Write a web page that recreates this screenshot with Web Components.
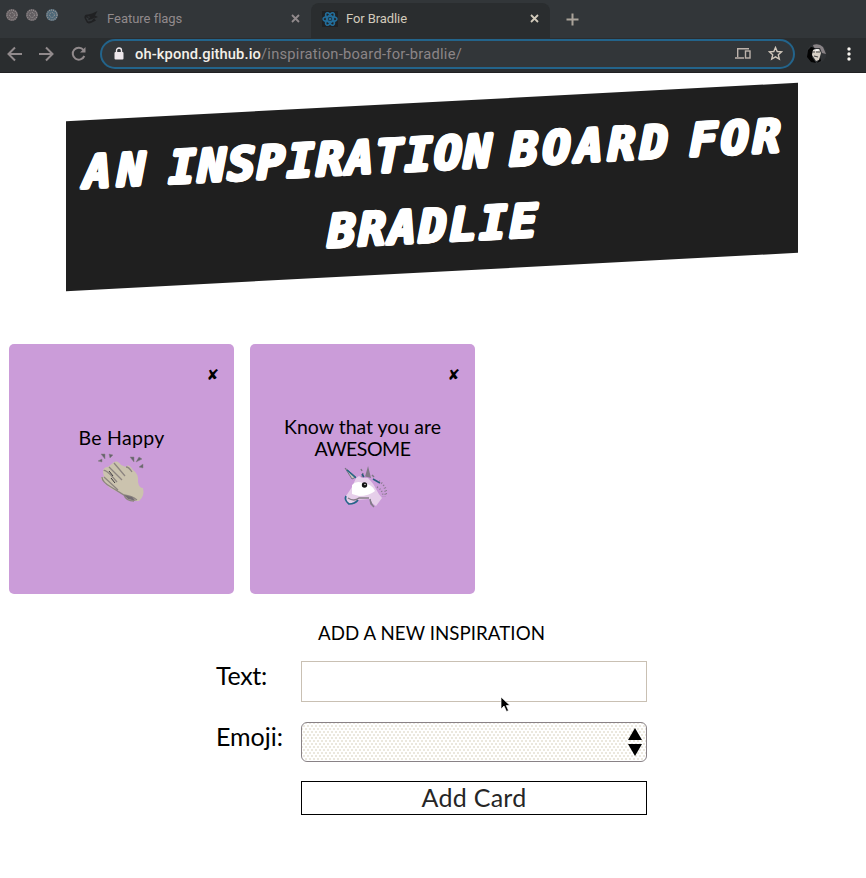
<!DOCTYPE html>
<html lang="en">
<head>
<meta charset="utf-8">
<title>For Bradlie</title>
<style>
html,body{margin:0;height:100%;background:#fff;overflow:hidden}
body{font-family:Lato,"Open Sans",sans-serif;color:#000}
</style>
</head>
<body>
<inspiration-app></inspiration-app>
<script>
const define = (name, html, setup) => {
  const template = document.createElement('template');
  template.innerHTML = html;
  customElements.define(name, class extends HTMLElement {
    connectedCallback() {
      if (this.shadowRoot) return;
      this.attachShadow({mode: 'open'}).append(template.content.cloneNode(true));
      if (setup) setup(this, this.shadowRoot);
    }
  });
};

// Inline text whose tracking is adjusted to fill the width given in "w".
define('fit-text', `
<style>:host{display:inline-block;white-space:nowrap;text-align:left}span{display:inline-block}</style>
<span><slot></slot></span>`, (el, root) => {
  const span = root.querySelector('span'), w = +el.getAttribute('w');
  const natural = span.getBoundingClientRect().width;
  span.style.letterSpacing = (w - natural) / el.textContent.length + 'px';
  el.style.width = w + 'px';
});

define('browser-tab', `
<style>
:host{display:flex;align-items:center;height:35px;box-sizing:border-box;color:#918a8c;font:13px Roboto,sans-serif;position:relative}
:host([active]){background:#2a2d2f;color:#d2cabb;border-radius:8px 8px 0 0}
.icon{width:18px;height:18px;display:flex;margin-right:7px}
.title{flex:1}
.close{width:9px;height:9px}
</style>
<span class="icon"><slot name="icon"></slot></span><span class="title"><slot></slot></span>
<svg class="close" viewBox="0 0 9 9" stroke="currentColor" stroke-width="1.8"><path d="M1 1l7 7M8 1L1 8"/></svg>`);

define('browser-tabs', `
<style>
:host{display:flex;height:38px;background:#323639;box-sizing:border-box;padding:3px 0 0 6px}
.lights{display:flex;gap:8px;margin-top:6px;width:76px}
.lights svg{width:12px;height:12px}
.one{width:218px;margin-top:-2px}
.two{width:239px;padding:0 11px 1px 10px;margin-left:11px;height:35px;margin-top:0}
.one{padding-bottom:1px}
.two{padding-bottom:4px}
.plus{width:13px;height:13px;margin:10px 0 0 16px}
</style>
<div class="lights">
<svg viewBox="0 0 12 12"><circle cx="6" cy="6" r="6" fill="#655f62"/><circle cx="6" cy="6" r="5" fill="none" stroke="#9b9393" stroke-width="1.2" stroke-dasharray="1 1"/><circle cx="6" cy="6" r="2.4" fill="none" stroke="#a69f9e" stroke-dasharray="1 1"/></svg>
<svg viewBox="0 0 12 12"><circle cx="6" cy="6" r="6" fill="#625e62"/><circle cx="6" cy="6" r="5" fill="none" stroke="#9b9393" stroke-width="1.2" stroke-dasharray="1 1"/><circle cx="6" cy="6" r="2.4" fill="none" stroke="#a69f9e" stroke-dasharray="1 1"/></svg>
<svg viewBox="0 0 12 12"><circle cx="6" cy="6" r="6" fill="#4d6878"/><circle cx="6" cy="6" r="5" fill="none" stroke="#a39a98" stroke-width="1.2" stroke-dasharray="1 1"/><circle cx="6" cy="6" r="2.4" fill="none" stroke="#a69f9e" stroke-dasharray="1 1"/></svg>
</div>
<browser-tab class="one"><svg slot="icon" viewBox="0 0 18 18"><path d="M2.500 9Q2 5 6 5.500L10 4.500 15.500 2 13 6.500 16 8 12 9.500 14 11.500 10 13.500Q5 16 4 12Z" fill="#202123"/><path d="M4 9Q6 6 8 8L6 11Q10 11 13 8L9.500 12 6 12.500Z" fill="#323639"/><path d="M5 8l3 2 4-4" stroke="#202123" fill="none"/></svg><fit-text w="75">Feature flags</fit-text></browser-tab>
<browser-tab class="two" active><svg slot="icon" viewBox="0 0 18 18"><rect x="1" y="1" width="16" height="16" fill="#202123"/><g fill="none" stroke="#236d9a" stroke-width="1.5"><ellipse cx="9" cy="9" rx="7" ry="2.8"/><ellipse cx="9" cy="9" rx="7" ry="2.8" transform="rotate(60 9 9)"/><ellipse cx="9" cy="9" rx="7" ry="2.8" transform="rotate(120 9 9)"/></g><circle cx="9" cy="9" r="1.5" fill="#236d9a"/></svg><fit-text w="61">For Bradlie</fit-text></browser-tab>
<svg class="plus" viewBox="0 0 13 13" stroke="#aaa39a" stroke-width="2"><path d="M6.5 .5v12M.5 6.5h12"/></svg>`);

define('browser-toolbar', `
<style>
:host{display:flex;align-items:center;height:35px;background:#2a2d2f;box-sizing:border-box;padding:0 12px 3px 7px;border-bottom:1px solid #202123}
.nav{width:15px;height:16px;margin-right:17px}
.bar{flex:none;width:695px;height:30px;box-sizing:border-box;border:2px solid #23648b;border-radius:15px;background:#323639;display:flex;align-items:center;padding:0 10px 0 12px;margin-left:-3px;font:14.700px Roboto,sans-serif;color:#8c8587}
.lock{width:10px;height:13px;margin-right:11px}
b{font-weight:500;color:#f4f0ea}
.grow{flex:1}.cast{width:16px;height:13px;margin-right:17px}.star{width:15px;height:15px}
.me{width:21px;height:21px;margin-left:11px}.dots{width:4px;height:14px;margin-left:20px}
</style>
<svg class="nav" viewBox="0 0 15 16" fill="none" stroke="#918a8c" stroke-width="2"><path d="M15 8H2M8 1.500L1.500 8 8 14.500"/></svg>
<svg class="nav" viewBox="0 0 15 16" fill="none" stroke="#918a8c" stroke-width="2"><path d="M0 8h13M7 1.500L13.500 8 7 14.500"/></svg>
<svg class="nav" viewBox="0 0 15 16" fill="none" stroke="#918a8c" stroke-width="2"><path d="M12.500 4A6 6 0 1 0 13.300 10"/><path d="M14.500 1v5.500H9z" fill="#918a8c" stroke="none"/></svg>
<div class="bar">
<svg class="lock" viewBox="0 0 10 13"><rect x=".5" y="5" width="9" height="7.500" rx="1" fill="#eee8ec"/><path d="M2.500 5.500V3.500a2.500 2.500 0 0 1 5 0v2" fill="none" stroke="#eee8ec" stroke-width="1.400"/></svg>
<b><fit-text w="126">oh-kpond.github.io</fit-text></b><fit-text w="201">/inspiration-board-for-bradlie/</fit-text><span class="grow"></span>
<svg class="cast" viewBox="0 0 16 13" fill="none" stroke="#bdb3ac" stroke-width="1.400"><path d="M14 1.700H2.700V10M0 11h9"/><rect x="10.500" y="4" width="4.500" height="7"/></svg>
<svg class="star" viewBox="0 0 15 15" fill="none" stroke="#d0c7bb" stroke-width="1.400"><path d="M7.500 1.500l1.700 4 4.400.4-3.300 2.900 1 4.200-3.800-2.200L3.700 13l1-4.200L1.400 5.900l4.400-.4z"/></svg>
</div>
<svg class="me" viewBox="0 0 21 21"><circle cx="10.500" cy="10.500" r="10" fill="#303336"/><path d="M7 2Q13 0 17 4l3 7-4-1-2-5-6 0z" fill="#898386"/><path d="M5 4L2 7 1 14l4 5 5 1-4-6 0-5 3-4zM14 14l-3 6 4-2z" fill="#030303"/><path d="M7 7l6-1 2 4-2 7-3 1-4-6z" fill="#d7d0c6"/><path d="M6 9h3M10 9h4M8 13l4 1" stroke="#444" stroke-width="1.200"/><path d="M7 7l4-1 3 1-3 1z" fill="#fff"/></svg>
<svg class="dots" viewBox="0 0 4 14" fill="#f7f4ef"><circle cx="2" cy="2" r="1.700"/><circle cx="2" cy="7" r="1.700"/><circle cx="2" cy="12" r="1.700"/></svg>`);

define('board-banner', `
<style>
:host{display:flex;width:732px;height:170px;box-sizing:border-box;margin:29px auto 0 65.500px;background:#1f1f1f;transform:skewY(-3deg);padding:16px 0 0 4px;justify-content:center}
h1{margin:0;color:#fff;font:italic bold 46px/72px "DejaVu Sans Mono",monospace;text-align:center;text-shadow:1.800px 0 #fff,-1.800px 0 #fff,0 1.500px #fff,0 -1.500px #fff,1.300px 1.200px #fff,-1.300px 1.200px #fff,1.300px -1.200px #fff,-1.300px -1.200px #fff}
.line{display:flex;justify-content:center;gap:17px}
</style>
<h1><div class="line"><fit-text w="68">AN</fit-text> <fit-text w="325">INSPIRATION</fit-text> <fit-text w="162">BOARD</fit-text> <fit-text w="95">FOR</fit-text></div><div class="line"><fit-text w="212">BRADLIE</fit-text></div></h1>`);

define('inspiration-card', `
<style>
:host{display:flex;flex-direction:column;align-items:center;justify-content:center;width:225px;height:250px;border-radius:5px;background:#cb9cd9;position:relative;font-size:19.500px;line-height:22px;text-align:center;box-sizing:border-box;padding-bottom:9px}
button{position:absolute;right:15px;top:23px;border:0;background:none;padding:0;font:15px/17px "DejaVu Sans",sans-serif;color:#000}
p{margin:0;display:flex;flex-direction:column;align-items:center}
.pic{height:50px;margin:4px 2px 0 0}
</style>
<button>✘</button><p><slot></slot></p><div class="pic"><slot name="emoji"></slot></div>`);

define('inspiration-form', `
<style>
:host{display:block;width:431px;margin:28px 0 0 216px}
h2{font-weight:400;font-size:18.700px;line-height:22px;margin:0 0 17px;text-align:center}
form{display:grid;grid-template-columns:85px 346px;grid-template-rows:41px 40px 34px;row-gap:20px}
label{font-size:25px;line-height:28px}
input{box-sizing:border-box;width:346px;height:41px;border:1px solid #c9c0b3;background:#fff;padding:0}
.sel{box-sizing:border-box;border:1px solid #898286;border-radius:6px;display:flex;justify-content:flex-end;align-items:center;padding-right:4px;background:radial-gradient(circle at 1px 1px,#e0dbcc .6px,transparent .9px) 1px 2px/4px 6px,radial-gradient(circle at 1px 1px,#e0dbcc .6px,transparent .9px) 3px 5px/4px 6px,#fff}
.sel svg{width:14px;height:28px}
button{box-sizing:border-box;grid-column:2;border:1px solid #000;background:#fff;padding:0 0 2px;margin-top:-1px;font:25px/30px Lato,sans-serif;color:#262626;height:34px}
</style>
<h2><fit-text w="227">ADD A NEW INSPIRATION</fit-text></h2>
<form><label><fit-text w="51">Text:</fit-text></label><input aria-label="Text">
<label><fit-text w="67">Emoji:</fit-text></label><div class="sel"><svg viewBox="0 0 14 28"><path d="M0 12L7 0l7 12zM0 16h14L7 28z"/></svg></div>
<button type="button"><fit-text w="105">Add Card</fit-text></button></form>`);

define('mouse-pointer', `
<style>:host{position:absolute;left:500px;top:696px;width:11px;height:18px}svg{display:block}</style>
<svg width="11" height="18" viewBox="0 0 11 18"><path d="M1 1v12l3-3 2.500 5.500 2-1L6.300 9.500H10z" fill="#000" stroke="#fff" stroke-width=".7"/></svg>`);

define('inspiration-app', `
<style>
:host{display:block;position:relative;height:878px}
.cards{display:flex;gap:16px;padding-left:9px;margin-top:72px}
svg{display:block}
</style>
<browser-tabs></browser-tabs><browser-toolbar></browser-toolbar>
<board-banner></board-banner>
<section class="cards">
<inspiration-card><fit-text w="86">Be Happy</fit-text>
<svg slot="emoji" width="50" height="50" viewBox="0 0 50 50">
<g transform="translate(1)"><path d="M6 19Q6 14 11 14L17 9Q21 7 24 12L29 14Q31 10 36 17Q42 21 41 29Q42 35 46 35Q48 43 42 48L36 48Q31 48 27 42L13 35 4 26Q4 23 7 24Z" fill="#cbc3ae"/>
<g fill="none" stroke="#8d8580" stroke-width="1.300"><path d="M5 24Q5 29 14 34L27 42Q35 43 40 47M7 24L21 37M7 18Q8 15 20 29M12 14L25 27M17 10L28 23M29 14Q32 14 35 19M27 42Q29 48 37 48"/></g><path d="M12 18l4 5M14 25l4 5" stroke="#39363a"/>
<path d="M27 42L35 44l4 4-8-2z" fill="#746d72"/>
<g fill="#65616d" stroke="#898285" stroke-width=".5"><path d="M1 8l4-2v3zM4 1l4 5V1zM12 1l4 1-3 3zM33 4h4v5zM39 9l3-5 3 2zM42 14l4-3v4z"/></g></g></svg></inspiration-card>
<inspiration-card><fit-text w="157">Know that you are</fit-text><fit-text w="96">AWESOME</fit-text>
<svg slot="emoji" width="50" height="50" viewBox="0 0 50 50">
<path d="M8 4l11 9-4 2z" fill="#c9c3bc" stroke="#777384"/><path d="M10 6l9 8" stroke="#236589" stroke-width="1.500"/>
<path d="M19 14L22 12 25 14 31 14Q37 20 39 25Q42 31 45 34L39 42Q34 39 32 35L20 36 13 40Q7 38 9 32L15 23Z" fill="#e6cfea"/>
<path d="M15 21Q19 16 26 19Q35 20 38 27Q32 32 22 32L15 30Z" fill="#fff"/>
<path d="M9 32Q7 36 12 40Q18 40 21 36" fill="none" stroke="#236589" stroke-width="1.700"/><path d="M11 34Q17 38 22 34L32 34" fill="none" stroke="#867d88" stroke-width="1.500"/>
<path d="M25 13l1-4M29 12l2-7 2 8zM24 5l1 2M35 11l2 2M33 35l1 5 3 3" fill="#817987" stroke="#817987" stroke-width="1.500"/><path d="M36 15l7 4M27 13l-2-3" stroke="#275b7d" stroke-width="1.500"/>
<g fill="none" stroke="#8b7c91" stroke-width="1.500" stroke-dasharray="1 2"><path d="M42 17Q49 20 48 33M40 23Q46 26 46 33M44 19Q51 24 49 32"/></g>
<circle cx="27.500" cy="21" r="2.700" fill="#111"/><circle cx="28" cy="20.500" r=".7" fill="#fff"/></svg></inspiration-card>
</section>
<inspiration-form></inspiration-form><mouse-pointer></mouse-pointer>`);
</script>
</body>
</html>
